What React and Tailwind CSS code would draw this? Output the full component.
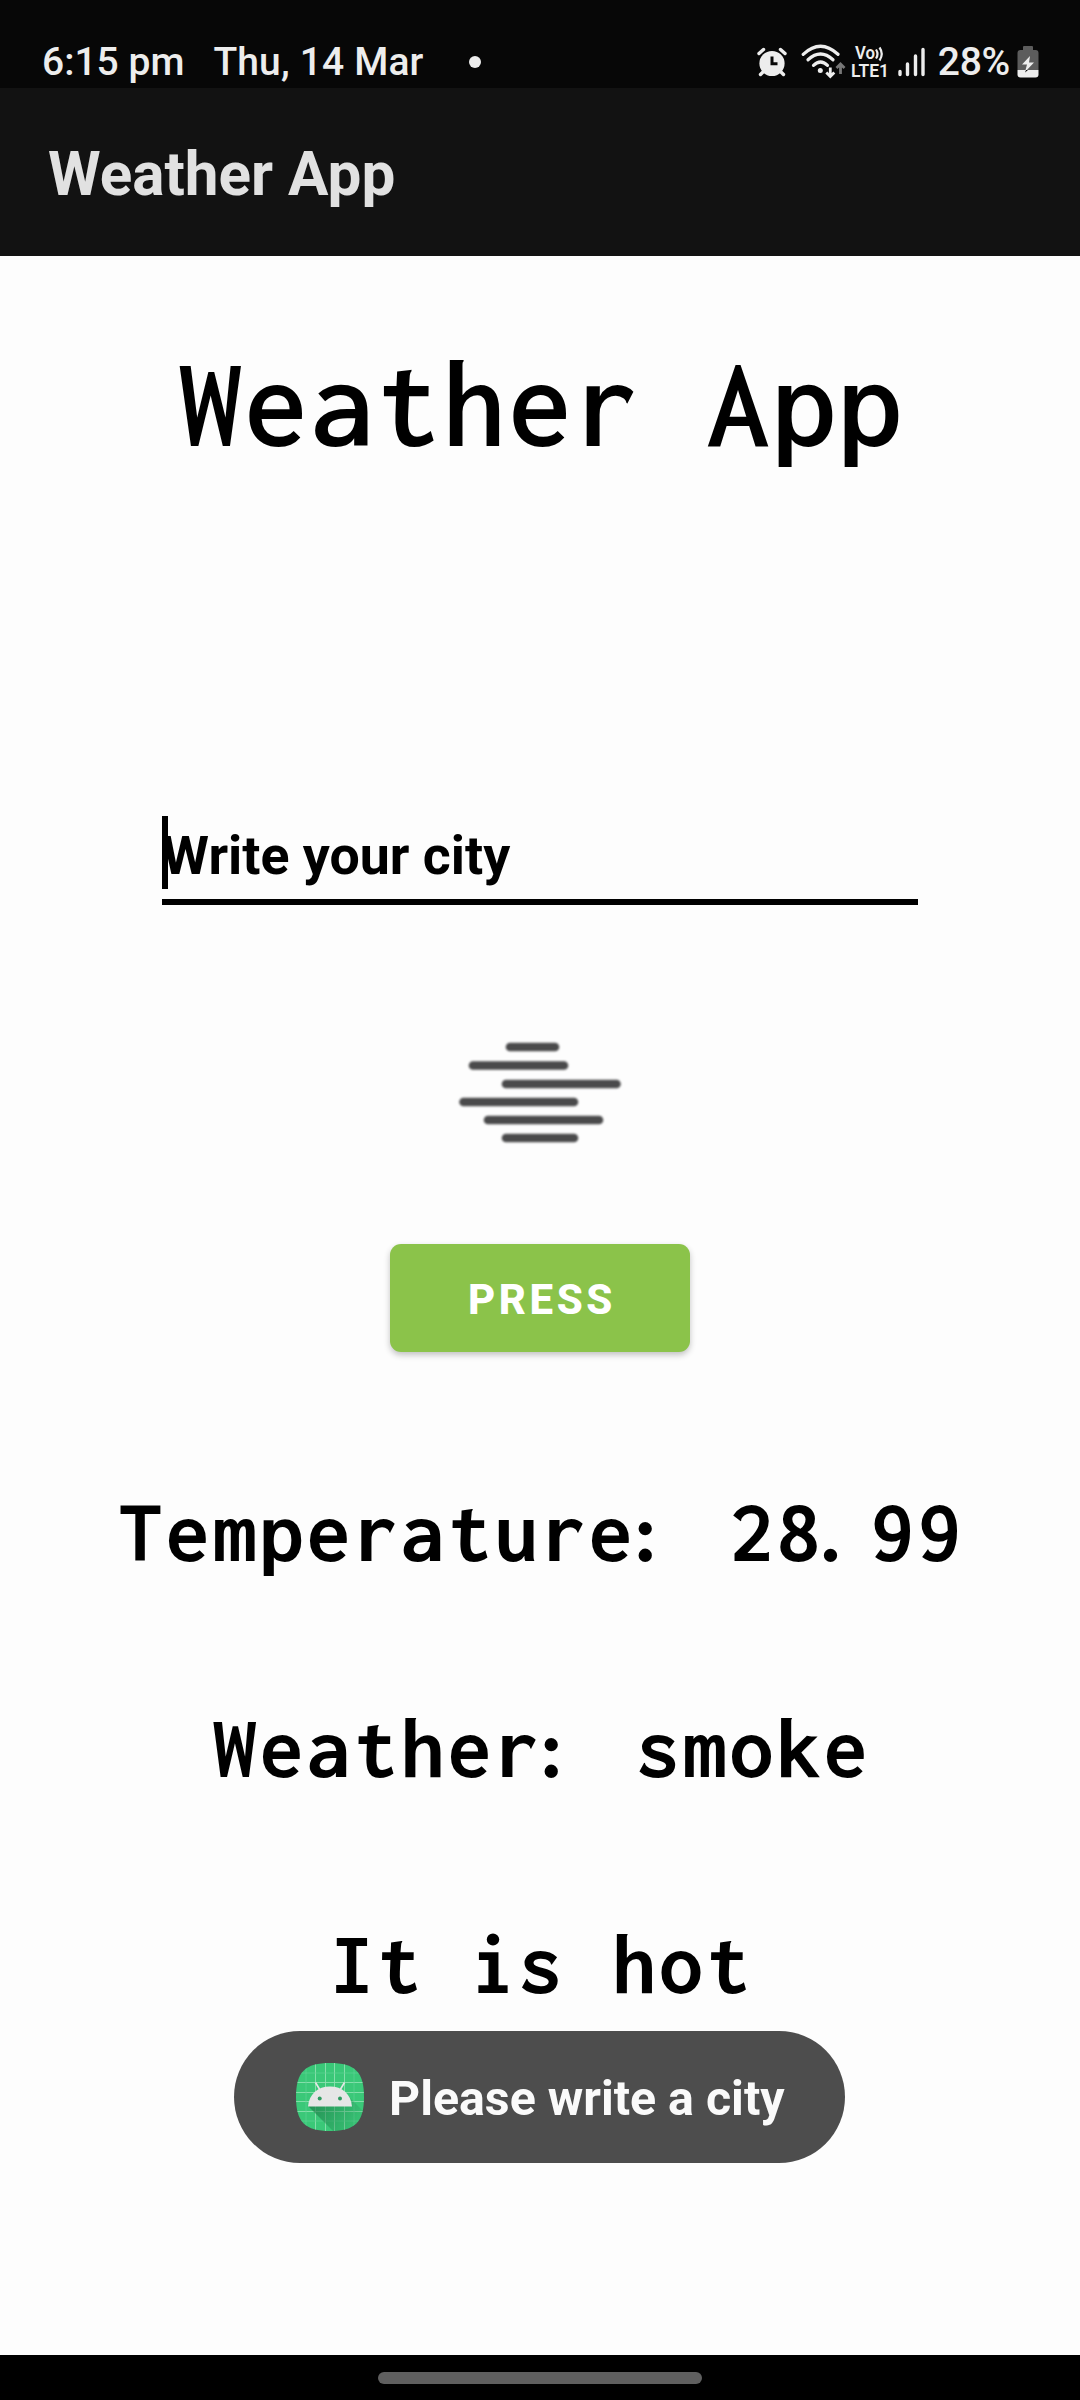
function AlarmIcon() {
  return (
    <svg width="30" height="30" viewBox="0 0 30 30" fill="none">
      <circle cx="15" cy="16.5" r="12.6" fill="#ededed" />
      <path d="M2 6.5 6.5 2.5M28 6.5 23.500 2.500M6 25 3.500 27.500M24 25l2.500 2.500" stroke="#ededed" strokeWidth="3.400" strokeLinecap="round" />
      <path d="M15 9.500V16.800H20.500" stroke="#080808" strokeWidth="3" />
    </svg>
  );
}

function WifiIcon() {
  return (
    <svg width="46" height="36" viewBox="0 0 46 36" fill="none">
      <g stroke="#ededed" strokeWidth="3.200" strokeLinecap="round">
        <path d="M2.200 10.300Q19.500-5.800 37 10.300" />
        <path d="M7 15.800Q19.500 4.300 32 15.800" />
        <path d="M12.500 21.300Q19.500 14.600 26.500 21.300" />
      </g>
      <circle cx="19.300" cy="26.600" r="2.500" fill="#ededed" />
      <path d="M29.300 23.500V32M25.300 28.500l4 4 4-4" stroke="#ededed" strokeWidth="2.800" />
      <path d="M39.500 30V20.500M35.500 24l4-4 4 4" stroke="#777777" strokeWidth="2.800" />
    </svg>
  );
}

function VolteIcon() {
  return (
    <svg className="overflow-visible" width="40" height="34" viewBox="0 0 40 34" fill="#ededed">
      <text x="4" y="14" fontFamily="Roboto" fontWeight="600" fontSize="18" textLength="20" lengthAdjust="spacingAndGlyphs">Vo</text>
      <path d="M25 4.500Q28 9 25 13.500M28.500 2.500Q33 9 28.500 15.500" fill="none" stroke="#ededed" strokeWidth="2.200" />
      <text x="0" y="31.500" fontFamily="Roboto" fontWeight="600" fontSize="18.500" textLength="38" lengthAdjust="spacingAndGlyphs">LTE1</text>
    </svg>
  );
}

function SignalIcon() {
  return (
    <svg width="28" height="30" viewBox="0 0 28 30" stroke="#ededed" strokeWidth="3.400" strokeLinecap="round">
      <path d="M2 24.500V27.500M9.500 17V27.500M17.500 9V27.500M25 2.500V27.500" />
    </svg>
  );
}

function BatteryIcon() {
  return (
    <svg width="22" height="32" viewBox="0 0 22 32">
      <path d="M7 0h8q1 0 1 1v3h2.500Q21.500 4 21.500 7V24H.5V7Q.5 4 3.500 4H6V1Q6 0 7 0Z" fill="#5c5c5c" />
      <path d="M.5 24h21v4.500q0 3-3 3h-15q-3 0-3-3Z" fill="#ededed" />
      <path d="M13 10 5 18.500h5L8 26l9-9.500h-5Z" fill="#ededed" />
      <path d="M9 24 8 26.500 11 24Z" fill="#080808" />
    </svg>
  );
}

function HazeIcon() {
  return (
    <svg className="blur-[0.8px]" width="164" height="102" viewBox="0 0 164 102" stroke="#4a4a4b" strokeWidth="8.600" strokeLinecap="round">
      <path d="M52 6H97M15 24.500H106M48 43H158.500M5.500 61H116M30 79H141M48 97H116" />
    </svg>
  );
}

function AndroidIcon() {
  return (
    <svg width="68" height="68" viewBox="0 0 68 68">
      <defs>
        <clipPath id="squircle">
          <path d="M34 0C59 0 68 9 68 34S59 68 34 68 0 59 0 34 9 0 34 0Z" />
        </clipPath>
        <linearGradient id="shade" x1="12" y1="43" x2="58" y2="68" gradientUnits="userSpaceOnUse">
          <stop offset="0" stopColor="#1d7f49" stopOpacity="0.75" />
          <stop offset="1" stopColor="#1d7f49" stopOpacity="0.1" />
        </linearGradient>
      </defs>
      <g clipPath="url(#squircle)">
        <rect width="68" height="68" fill="#3ac878" />
        <path d="M19.500 0V68M29.500 0V68M38.500 0V68M48.500 0V68M0 19.500H68M0 29.500H68M0 38.500H68M0 48.500H68" stroke="#8ce0b0" strokeWidth="0.900" />
        <path d="M10 0V68M58 0V68M0 10H68M0 58H68" stroke="#5dd293" strokeWidth="0.700" />
        <path d="M12 43 37 68H68V49L50 31Z" fill="url(#shade)" />
      </g>
      <path d="M12 43.500C13 31 22 23.500 34 23.500S55 31 56 43.500Z" fill="#e6e6e6" />
      <path d="M19.500 19.500 24 27M48.500 19.500 44 27" stroke="#e6e6e6" strokeWidth="1.600" />
      <circle cx="23.700" cy="35.500" r="2" fill="#2f9b60" />
      <circle cx="44" cy="35.500" r="2" fill="#2f9b60" />
    </svg>
  );
}

function Reading({ children }) {
  return (
    <p className="h-[100px] pt-[4px] pl-[3px] text-center font-['Inconsolata',monospace] text-[88px] font-[680] leading-[100px] tracking-[3px] whitespace-pre">
      {children}
    </p>
  );
}

export default function App() {
  return (
    <div className="flex h-[2400px] w-[1080px] flex-col overflow-hidden bg-[#fdfdfd] font-['Roboto',sans-serif] text-black">
      <header className="flex h-[88px] items-start justify-between bg-[#070707] pt-[38px] pr-[41px] pl-[42px] text-[39px] leading-[46px] font-medium text-[#ededed]">
        <div className="flex items-center whitespace-nowrap pt-px">
          <span>6:15 pm</span>
          <span className="ml-[29px] tracking-[0.150px]">Thu, 14 Mar</span>
          <span className="ml-[45px] size-3 rounded-full bg-[#ededed]" />
        </div>
        <div className="flex items-center">
          <AlarmIcon />
          <span className="ml-[14px]"><WifiIcon /></span>
          <span className="ml-[4px]"><VolteIcon /></span>
          <span className="ml-[7px]"><SignalIcon /></span>
          <span className="ml-[12px] pt-px tracking-[-0.300px]">28%</span>
          <span className="ml-[7px]"><BatteryIcon /></span>
        </div>
      </header>
      <div className="flex h-[168px] items-center bg-[#121212] pt-[5px] pl-12 text-[60.2px] leading-[70px] font-bold text-[#e1e1e1]">
        Weather App
      </div>

      <main className="flex flex-1 flex-col items-center">
        <h1 className="mt-[78px] h-[136px] pl-[2px] font-['Inconsolata',monospace] text-[128px] leading-[138px] font-[640] tracking-[2px]">Weather App</h1>

        <div className="mt-[346px] flex h-[89px] w-[756px] flex-col border-b-[6px] border-black">
          <div className="flex h-[73px] items-center">
            <span className="h-[73px] w-[6px] bg-black" />
            <span className="-ml-[6px] pt-[6px] text-[53.7px] leading-[80px] font-bold">Write your city</span>
          </div>
        </div>

        <div className="mt-[136px] h-[102px]"><HazeIcon /></div>

        <button className="mt-[101px] h-[108px] w-[300px] rounded-[11px] bg-[#8bc34a] pt-[2px] pl-[4px] text-[42px] font-extrabold tracking-[3.600px] text-white shadow-[0_3px_6px_rgba(0,0,0,0.24)]">PRESS</button>

        <div className="mt-[126px] flex flex-col gap-[116px]">
          <Reading>Temperature<span className="relative -left-[11px]">:</span> 28<span className="relative -left-[14px]">.</span>99</Reading>
          <Reading>Weather<span className="relative -left-[11px]">:</span> smoke</Reading>
          <Reading>It is hot</Reading>
        </div>

        <div className="mt-[21px] mr-px flex h-[132px] w-[611px] items-center rounded-full bg-[#4d4d4d] pl-[62px] text-[48.3px] font-bold text-[#fafafa]">
          <AndroidIcon />
          <span className="ml-[25px] pt-[4px] whitespace-nowrap">Please write a city</span>
        </div>
      </main>

      <footer className="flex h-[45px] justify-center bg-black pt-[17px]">
        <div className="h-3 w-[324px] rounded-full bg-[#5f5f5f]" />
      </footer>
    </div>
  );
}
